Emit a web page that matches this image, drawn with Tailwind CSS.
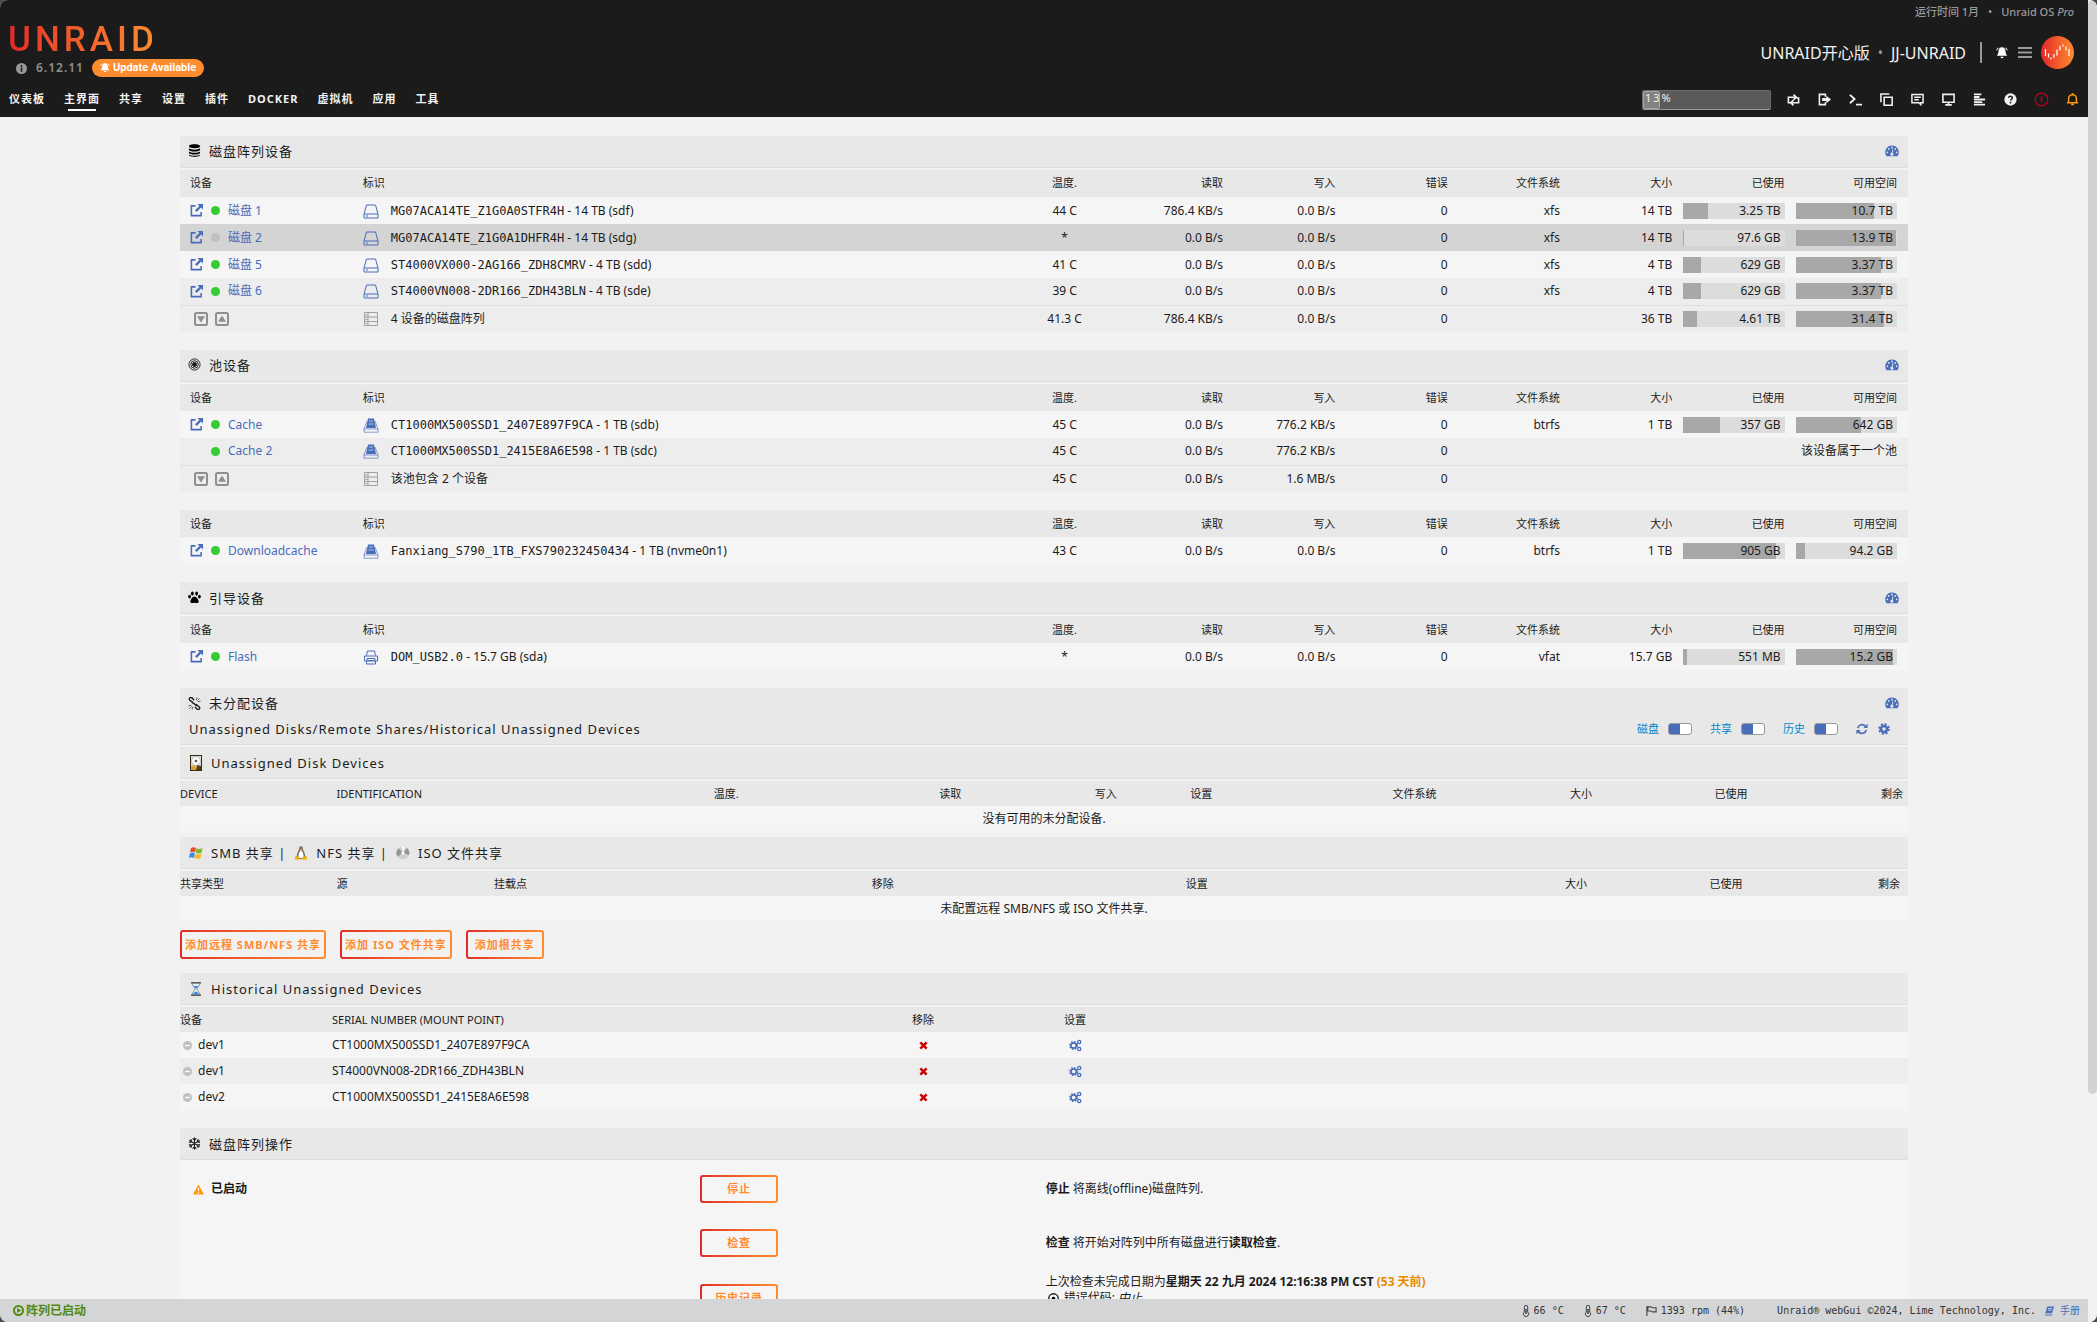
<!DOCTYPE html>
<html lang="zh-CN">
<head>
<meta charset="utf-8">
<title>JJ-UNRAID / 主界面</title>
<script src="https://cdn.jsdelivr.net/npm/@tailwindcss/browser@4"></script>
</head>
<body class="bg-[#4b4b52] font-['Noto_Sans','Noto_Sans_CJK_SC',sans-serif] text-[12px] leading-4 text-[#1c1b1b]">

<svg class="hidden" aria-hidden="true">
  <symbol id="i-ext" viewBox="0 0 14 14"><path d="M6 2H1.500v10.500H12V8.500" fill="none" stroke="currentColor" stroke-width="1.700"/><path d="M8 0h6v6l-2.100-2.100-4.700 4.700-1.800-1.800 4.700-4.700z" fill="currentColor"/></symbol>
  <symbol id="i-hdd" viewBox="0 0 16 16"><path d="M3.500 2h9L15 11v4H1v-4zM1 11h14" fill="none" stroke="currentColor"/><path d="M3 13h2" stroke="currentColor"/></symbol>
  <symbol id="i-ssd" viewBox="0 0 16 16"><path d="M5 1.500h6l2 9.500H3z" fill="currentColor"/><path d="M6 4h4M5.500 7h5" stroke="#cdd8ee" stroke-width=".8"/><path d="M4 4L1 12v3.200h14V12l-3-8M1 12h14" fill="none" stroke="currentColor" stroke-opacity=".65"/></symbol>
  <symbol id="i-usb" viewBox="0 0 16 16"><path d="M3.500 6.500l1-4.500h7l1 4.500M1.500 7h13v5h-13zM3.500 12v3h9v-3M4 9.500h8v2H4z" fill="none" stroke="currentColor"/></symbol>
  <symbol id="i-rack" viewBox="0 0 16 16"><path d="M1.500 1.500h13v13h-13zM1.500 6h13M1.500 10.500h13M5 1.500v13" fill="none" stroke="#a0a0a0"/><path d="M2.500 4h2M2.500 8.500h2M2.500 12.500h2" stroke="#a0a0a0"/></symbol>
  <symbol id="i-down" viewBox="0 0 14 14"><rect x="1" y="1" width="12" height="12" rx="1.500" fill="none" stroke="#8f8f8f" stroke-width="2"/><path d="M3 4.300h8L7 10.500z" fill="#8f8f8f"/></symbol>
  <symbol id="i-up" viewBox="0 0 14 14"><rect x="1" y="1" width="12" height="12" rx="1.500" fill="none" stroke="#8f8f8f" stroke-width="2"/><path d="M3 9.700h8L7 3.500z" fill="#8f8f8f"/></symbol>
  <symbol id="i-gauge" viewBox="0 0 14 12"><path d="M7 .5a6.800 6.800 0 0 0-5.800 10.300l.5.500h10.600l.5-.5A6.800 6.800 0 0 0 7 .5z" fill="#486dba"/><g fill="#e8e8e8"><circle cx="2.300" cy="7.300" r=".9"/><circle cx="3.700" cy="3.900" r=".9"/><circle cx="7" cy="2.500" r=".9"/><circle cx="10.300" cy="3.900" r=".9"/><circle cx="11.700" cy="7.300" r=".9"/><path d="M7.600 4.200l.9.200-.8 3.500a1.500 1.500 0 1 1-.9-.2z"/></g></symbol>
  <symbol id="i-cogs" viewBox="0 0 14 14"><circle cx="5" cy="7" r="2.900" fill="none" stroke="#486dba" stroke-width="1.800"/><circle cx="5" cy="7" r="4.300" fill="none" stroke="#486dba" stroke-width="1.300" stroke-dasharray="1.700 1.680"/><circle cx="11" cy="3.200" r="1.700" fill="none" stroke="#486dba" stroke-width="1.400"/><circle cx="11" cy="10.800" r="1.700" fill="none" stroke="#486dba" stroke-width="1.400"/></symbol>
  <symbol id="i-x" viewBox="0 0 10 10"><path d="M1.500 1.500l7 7M8.500 1.500l-7 7" stroke="#cc0000" stroke-width="2.800"/></symbol>
  <symbol id="i-minus" viewBox="0 0 10 10"><circle cx="5" cy="5" r="5" fill="#c0c0c0"/><path d="M2.200 5h5.600" stroke="#fff" stroke-width="1.500"/></symbol>
  <symbol id="i-bell" viewBox="0 0 12 12"><path d="M6 .3c2.600 0 3.500 2 3.600 4.700.1 2 .9 2.700 1.600 3.700H.8c.7-1 1.500-1.700 1.600-3.700C2.500 2.300 3.400.3 6 .3zM4.500 9.700h3a1.500 1.500 0 0 1-3 0z" fill="currentColor"/><path d="M2.300.7L.6 3.300M9.700.7l1.700 2.600" stroke="currentColor"/></symbol>
  <symbol id="i-thermo" viewBox="0 0 8 12"><path d="M2.300 7V2a1.700 1.700 0 0 1 3.400 0v5a2.600 2.600 0 1 1-3.400 0z" fill="none" stroke="#444"/><path d="M4 4v5" stroke="#444" stroke-width="1.500"/></symbol>
</svg>

<div class="flex h-screen overflow-hidden rounded-[8px] bg-[#f2f2f2]">
<div class="flex min-w-0 flex-1 flex-col">

<header class="shrink-0 bg-[#1c1b1b] text-[#f2f2f2]">
  <div class="flex h-[82px] justify-between pr-[14px] pl-2">
    <div class="pt-[25px]">
      <a href="#" class="block w-fit bg-linear-to-r from-[#e22828] to-[#ff8c2f] bg-clip-text font-['Roboto',sans-serif] text-[35px] leading-[30px] font-medium tracking-[4px] text-transparent">UNRAID</a>
      <div class="mt-1 flex h-[18px] items-center pl-2">
        <svg class="size-[11px]" viewBox="0 0 12 12"><circle cx="6" cy="6" r="6" fill="#999"/><path d="M6 2.300v1.700M6 5v4.500" stroke="#1c1b1b" stroke-width="1.800"/></svg>
        <span class="ml-[9px] text-[12px] font-semibold tracking-[1px] text-[#8f8f8f]">6.12.11</span>
        <button class="ml-2 flex h-[18px] items-center gap-[3px] rounded-full bg-[#ff8c2f] px-2 font-['Roboto',sans-serif] text-[11px] font-bold whitespace-nowrap text-white"><svg class="size-[10px]"><use href="#i-bell"/></svg>Update Available</button>
      </div>
    </div>
    <div class="flex flex-col items-end pt-1">
      <div class="flex h-4 items-center text-[11px] font-medium text-[#999]"><span>运行时间 1月</span><span class="mx-[9px]">•</span><span>Unraid OS <em>Pro</em></span></div>
      <div class="mt-4 flex h-[33px] items-center">
        <span class="text-[16px] leading-6">UNRAID开心版</span><span class="mx-2 text-[14px] text-[#999]">•</span><span class="text-[16px] leading-6">JJ-UNRAID</span>
        <span class="mx-[14px] h-[21px] w-[2px] bg-[#999]"></span>
        <button aria-label="通知" class="text-white"><svg class="block size-3"><use href="#i-bell"/></svg></button>
        <button aria-label="菜单" class="mr-[9px] ml-[10px]"><svg class="block h-[11px] w-[14px]" viewBox="0 0 14 11"><path d="M0 1h14M0 5.500h14M0 10h14" stroke="#999" stroke-width="1.800"/></svg></button>
        <svg class="size-[33px]" viewBox="0 0 33 33"><defs><linearGradient id="g"><stop stop-color="#e22828"/><stop offset="1" stop-color="#ff8c2f"/></linearGradient></defs><circle cx="16.500" cy="16.500" r="16.500" fill="url(#g)"/><path d="M4.500 13v7M7.500 17.500v4M10 21.500v2M13 18v4M16 13.500v6M19 10v4.500M22 8.500v2M25 10.500v4M28 13v7" stroke="#fff" stroke-width="1.200"/></svg>
      </div>
    </div>
  </div>
  <div class="flex h-[35px] items-center justify-between">
    <nav class="flex gap-[19px] pt-[2px] pl-[9px] text-[11px] font-bold tracking-[1px] whitespace-nowrap [&_a]:h-5 [&_a]:leading-4">
      <a href="#">仪表板</a><a href="#" class="relative after:absolute after:inset-x-1 after:bottom-0 after:h-[2px] after:bg-white">主界面</a><a href="#">共享</a><a href="#">设置</a><a href="#">插件</a><a href="#">DOCKER</a><a href="#">虚拟机</a><a href="#">应用</a><a href="#">工具</a>
    </nav>
    <div class="flex items-center text-[#f2f2f2] [&_button]:flex [&_button]:w-[31px] [&_button]:justify-center [&_svg]:size-[13px]">
      <div class="relative mr-[7px] h-5 w-[129px] rounded-xs border border-[#6b6b6b] border-b-[#999] bg-[#5a5a5a]">
        <div class="h-full rounded-xs border border-[#a5a5a5] bg-[#828282]" style="width:13%"></div>
        <span class="absolute top-0 left-[2px] text-[11px] leading-[14px] tracking-[2px]">13%</span>
      </div>
      <button aria-label="切换"><svg viewBox="0 0 14 14" fill="none" stroke="currentColor" stroke-width="1.700"><path d="M1.500 8.500V4.500h7M5.500 10.500h7V5.500h-2M7 1.700l3 2.800-3 2.800M7 7.700l-3 2.800 3 2.800M1.500 8.500v2h2"/></svg></button>
      <button aria-label="注销"><svg viewBox="0 0 14 14"><path d="M8 4V1.500H1.500v11H8V10" fill="none" stroke="currentColor" stroke-width="1.700"/><path d="M4.500 5.500h4.500V3l5 4-5 4V8.500H4.500z" fill="currentColor"/></svg></button>
      <button aria-label="终端"><svg viewBox="0 0 14 14" fill="none" stroke="currentColor" stroke-width="2"><path d="M1 2l5 4.500L1 11M7.500 12.500H14"/></svg></button>
      <button aria-label="文件管理器"><svg viewBox="0 0 14 14" fill="none" stroke="currentColor" stroke-width="1.700"><path d="M4.500 4.500h8.600v8.600H4.500zM1 10V1h9"/></svg></button>
      <button aria-label="反馈"><svg viewBox="0 0 14 14" fill="none" stroke="currentColor" stroke-width="1.600"><path d="M1 1.500h12v9h-2.500v2l-2-2H1zM3.500 4.500h7M3.500 7.300h5"/></svg></button>
      <button aria-label="信息"><svg viewBox="0 0 14 14" fill="none" stroke="currentColor" stroke-width="1.700"><path d="M1 1.500h12v8.500H1zM3.500 12.800h7M7 10v2"/></svg></button>
      <button aria-label="日志"><svg viewBox="0 0 14 14" stroke="currentColor" stroke-width="1.900"><path d="M1 1.500h8M1 4.300h6M1 7h12M1 9.800h9M1 12.600h12"/></svg></button>
      <button aria-label="帮助"><svg viewBox="0 0 14 14"><circle cx="7" cy="7" r="6.600" fill="currentColor"/><path d="M5 5.300c.2-2.300 4.200-2.200 4 .1C8.900 6.700 7.200 6.700 7 8.300M7 9.400v1.800" fill="none" stroke="#1c1b1b" stroke-width="1.600"/></svg></button>
      <button aria-label="警报"><svg class="scale-110" viewBox="0 0 14 14" fill="none" stroke="#b8001f" stroke-width="1.200"><circle cx="7" cy="7" r="6.200"/><path d="M7 4v6" stroke-width="1.500"/></svg></button>
      <button aria-label="通知"><svg viewBox="0 0 14 14" fill="none" stroke="#ff9900" stroke-width="1.600"><path d="M1 10.500h12M2.800 10.500V6a4.200 4.200 0 0 1 8.400 0v4.500M5.500 12.500h3M7 0v2"/></svg></button>
    </div>
  </div>
</header>

<main class="min-h-0 flex-1 overflow-hidden px-[180px] pt-[19px]">

  <section>
    <h2 class="mb-[2px] flex h-8 items-center border-b border-[#dedede] bg-[#e8e8e8] pr-[9px] pb-[2px] pl-2 text-[13px] tracking-[1px]">
      <svg class="mr-2 size-[13px]" viewBox="0 0 14 14"><path d="M1 2.500C1-.3 13-.3 13 2.500S1 5.300 1 2.500zM1 4.600c2 2 10 2 12 0v1.600c0 2.500-12 2.500-12 0zM1 8c2 2 10 2 12 0v1.500c0 2.500-12 2.500-12 0zM1 11.200c2 2 10 2 12 0v.5c0 3-12 3-12 0z"/></svg>
      <span class="flex-1">磁盘阵列设备</span><a href="#" aria-label="切换读写"><svg class="h-3 w-[14px]"><use href="#i-gauge"/></svg></a>
    </h2>
    <table class="w-full table-fixed text-right whitespace-nowrap [&_td]:pr-[11px] [&_td:nth-child(3)]:pr-[2px] [&_th]:pr-[11px] [&_th]:pb-[2px] [&_th]:font-normal [&_th:nth-child(3)]:pr-[2px] [&_tr]:h-[27px]">
      <colgroup><col class="w-[10%]"><col class="w-[38%]"><col class="w-[6.5%]"><col class="w-[6.5%]"><col class="w-[6.5%]"><col class="w-[6.5%]"><col class="w-[6.5%]"><col class="w-[6.5%]"><col class="w-[6.5%]"><col class="w-[6.5%]"></colgroup>
      <thead class="bg-[#e8e8e8] text-[11px]"><tr><th class="pl-[10px] text-left">设备</th><th class="pl-[10px] text-left">标识</th><th class="text-center">温度.</th><th>读取</th><th>写入</th><th>错误</th><th>文件系统</th><th>大小</th><th>已使用</th><th>可用空间</th></tr></thead>
      <tbody>
        <tr class="bg-[#f5f5f5]"><td><div class="flex items-center pl-[10px] text-[#486dba]"><a href="#" aria-label="浏览"><svg class="size-[13px]"><use href="#i-ext"/></svg></a><span class="mx-2 size-[9px] rounded-full bg-[#33cc33]"></span><a href="#">磁盘 1</a></div></td><td><div class="flex items-center pl-[10px]"><svg class="mr-3 size-4 text-[#486dba]"><use href="#i-hdd"/></svg><span><span class="font-['DejaVu_Sans_Mono',monospace]">MG07ACA14TE_Z1G0A0STFR4H</span> - 14 TB (sdf)</span></div></td><td class="text-center">44 C</td><td>786.4 KB/s</td><td>0.0 B/s</td><td>0</td><td>xfs</td><td>14 TB</td>
          <td><div class="relative h-4 bg-[#dcdcdc]"><div class="absolute inset-y-0 left-0 bg-[#a8a8a8]" style="width:24%"></div><span class="relative pr-1">3.25 TB</span></div></td><td><div class="relative h-4 bg-[#dcdcdc]"><div class="absolute inset-y-0 left-0 bg-[#a8a8a8]" style="width:77%"></div><span class="relative pr-1">10.7 TB</span></div></td></tr>
        <tr class="bg-[#d4d4d4]"><td><div class="flex items-center pl-[10px] text-[#486dba]"><a href="#" aria-label="浏览"><svg class="size-[13px]"><use href="#i-ext"/></svg></a><span class="mx-2 size-[9px] rounded-full bg-[#c0c0c0]"></span><a href="#">磁盘 2</a></div></td><td><div class="flex items-center pl-[10px]"><svg class="mr-3 size-4 text-[#486dba]"><use href="#i-hdd"/></svg><span><span class="font-['DejaVu_Sans_Mono',monospace]">MG07ACA14TE_Z1G0A1DHFR4H</span> - 14 TB (sdg)</span></div></td><td class="text-center">*</td><td>0.0 B/s</td><td>0.0 B/s</td><td>0</td><td>xfs</td><td>14 TB</td>
          <td><div class="relative h-4 bg-[#dcdcdc]"><div class="absolute inset-y-0 left-0 bg-[#a8a8a8]" style="width:1%"></div><span class="relative pr-1">97.6 GB</span></div></td><td><div class="relative h-4 bg-[#dcdcdc]"><div class="absolute inset-y-0 left-0 bg-[#a8a8a8]" style="width:99%"></div><span class="relative pr-1">13.9 TB</span></div></td></tr>
        <tr class="bg-[#f5f5f5]"><td><div class="flex items-center pl-[10px] text-[#486dba]"><a href="#" aria-label="浏览"><svg class="size-[13px]"><use href="#i-ext"/></svg></a><span class="mx-2 size-[9px] rounded-full bg-[#33cc33]"></span><a href="#">磁盘 5</a></div></td><td><div class="flex items-center pl-[10px]"><svg class="mr-3 size-4 text-[#486dba]"><use href="#i-hdd"/></svg><span><span class="font-['DejaVu_Sans_Mono',monospace]">ST4000VX000-2AG166_ZDH8CMRV</span> - 4 TB (sdd)</span></div></td><td class="text-center">41 C</td><td>0.0 B/s</td><td>0.0 B/s</td><td>0</td><td>xfs</td><td>4 TB</td>
          <td><div class="relative h-4 bg-[#dcdcdc]"><div class="absolute inset-y-0 left-0 bg-[#a8a8a8]" style="width:17%"></div><span class="relative pr-1">629 GB</span></div></td><td><div class="relative h-4 bg-[#dcdcdc]"><div class="absolute inset-y-0 left-0 bg-[#a8a8a8]" style="width:84%"></div><span class="relative pr-1">3.37 TB</span></div></td></tr>
        <tr class="bg-[#ededed]"><td><div class="flex items-center pl-[10px] text-[#486dba]"><a href="#" aria-label="浏览"><svg class="size-[13px]"><use href="#i-ext"/></svg></a><span class="mx-2 size-[9px] rounded-full bg-[#33cc33]"></span><a href="#">磁盘 6</a></div></td><td><div class="flex items-center pl-[10px]"><svg class="mr-3 size-4 text-[#486dba]"><use href="#i-hdd"/></svg><span><span class="font-['DejaVu_Sans_Mono',monospace]">ST4000VN008-2DR166_ZDH43BLN</span> - 4 TB (sde)</span></div></td><td class="text-center">39 C</td><td>0.0 B/s</td><td>0.0 B/s</td><td>0</td><td>xfs</td><td>4 TB</td>
          <td><div class="relative h-4 bg-[#dcdcdc]"><div class="absolute inset-y-0 left-0 bg-[#a8a8a8]" style="width:17%"></div><span class="relative pr-1">629 GB</span></div></td><td><div class="relative h-4 bg-[#dcdcdc]"><div class="absolute inset-y-0 left-0 bg-[#a8a8a8]" style="width:84%"></div><span class="relative pr-1">3.37 TB</span></div></td></tr>
      </tbody>
      <tfoot><tr class="border-t border-[#dedede] bg-[#ededed]"><td><div class="flex gap-[7px] pl-[14px]"><button aria-label="全部停转"><svg class="block size-[14px]"><use href="#i-down"/></svg></button><button aria-label="全部起转"><svg class="block size-[14px]"><use href="#i-up"/></svg></button></div></td><td><div class="flex items-center pl-[10px]"><svg class="mr-3 size-4"><use href="#i-rack"/></svg><span>4 设备的磁盘阵列</span></div></td><td class="text-center">41.3 C</td><td>786.4 KB/s</td><td>0.0 B/s</td><td>0</td><td></td><td>36 TB</td>
          <td><div class="relative h-4 bg-[#dcdcdc]"><div class="absolute inset-y-0 left-0 bg-[#a8a8a8]" style="width:14%"></div><span class="relative pr-1">4.61 TB</span></div></td><td><div class="relative h-4 bg-[#dcdcdc]"><div class="absolute inset-y-0 left-0 bg-[#a8a8a8]" style="width:87%"></div><span class="relative pr-1">31.4 TB</span></div></td></tr></tfoot>
    </table>
  </section>

  <section class="mt-[18px]">
    <h2 class="mb-[2px] flex h-8 items-center border-b border-[#dedede] bg-[#e8e8e8] pr-[9px] pb-[2px] pl-2 text-[13px] tracking-[1px]">
      <svg class="mr-2 size-[13px]" viewBox="0 0 14 14" fill="none" stroke="#1c1b1b"><circle cx="7" cy="7" r="6"/><circle cx="7" cy="7" r="4"/><circle cx="7" cy="7" r="2.200" fill="#1c1b1b"/></svg>
      <span class="flex-1">池设备</span><a href="#" aria-label="切换读写"><svg class="h-3 w-[14px]"><use href="#i-gauge"/></svg></a>
    </h2>
    <table class="w-full table-fixed text-right whitespace-nowrap [&_td]:pr-[11px] [&_td:nth-child(3)]:pr-[2px] [&_th]:pr-[11px] [&_th]:font-normal [&_th:nth-child(3)]:pr-[2px] [&_tr]:h-[27px]">
      <colgroup><col class="w-[10%]"><col class="w-[38%]"><col class="w-[6.5%]"><col class="w-[6.5%]"><col class="w-[6.5%]"><col class="w-[6.5%]"><col class="w-[6.5%]"><col class="w-[6.5%]"><col class="w-[6.5%]"><col class="w-[6.5%]"></colgroup>
      <thead class="bg-[#e8e8e8] text-[11px]"><tr><th class="pl-[10px] text-left">设备</th><th class="pl-[10px] text-left">标识</th><th class="text-center">温度.</th><th>读取</th><th>写入</th><th>错误</th><th>文件系统</th><th>大小</th><th>已使用</th><th>可用空间</th></tr></thead>
      <tbody>
        <tr class="bg-[#f5f5f5]"><td><div class="flex items-center pl-[10px] text-[#486dba]"><a href="#" aria-label="浏览"><svg class="size-[13px]"><use href="#i-ext"/></svg></a><span class="mx-2 size-[9px] rounded-full bg-[#33cc33]"></span><a href="#">Cache</a></div></td><td><div class="flex items-center pl-[10px]"><svg class="mr-3 size-4 text-[#486dba]"><use href="#i-ssd"/></svg><span><span class="font-['DejaVu_Sans_Mono',monospace]">CT1000MX500SSD1_2407E897F9CA</span> - 1 TB (sdb)</span></div></td><td class="text-center">45 C</td><td>0.0 B/s</td><td>776.2 KB/s</td><td>0</td><td>btrfs</td><td>1 TB</td>
          <td><div class="relative h-4 bg-[#dcdcdc]"><div class="absolute inset-y-0 left-0 bg-[#a8a8a8]" style="width:36%"></div><span class="relative pr-1">357 GB</span></div></td><td><div class="relative h-4 bg-[#dcdcdc]"><div class="absolute inset-y-0 left-0 bg-[#a8a8a8]" style="width:64%"></div><span class="relative pr-1">642 GB</span></div></td></tr>
        <tr class="bg-[#ededed]"><td><div class="flex items-center pl-[23px] text-[#486dba]"><span class="mx-2 size-[9px] rounded-full bg-[#33cc33]"></span><a href="#">Cache 2</a></div></td><td><div class="flex items-center pl-[10px]"><svg class="mr-3 size-4 text-[#486dba]"><use href="#i-ssd"/></svg><span><span class="font-['DejaVu_Sans_Mono',monospace]">CT1000MX500SSD1_2415E8A6E598</span> - 1 TB (sdc)</span></div></td><td class="text-center">45 C</td><td>0.0 B/s</td><td>776.2 KB/s</td><td>0</td><td></td><td></td><td colspan="2">该设备属于一个池</td></tr>
      </tbody>
      <tfoot><tr class="border-t border-[#dedede] bg-[#ededed]"><td><div class="flex gap-[7px] pl-[14px]"><button aria-label="全部停转"><svg class="block size-[14px]"><use href="#i-down"/></svg></button><button aria-label="全部起转"><svg class="block size-[14px]"><use href="#i-up"/></svg></button></div></td><td><div class="flex items-center pl-[10px]"><svg class="mr-3 size-4"><use href="#i-rack"/></svg><span>该池包含 2 个设备</span></div></td><td class="text-center">45 C</td><td>0.0 B/s</td><td>1.6 MB/s</td><td>0</td><td></td><td></td><td></td><td></td></tr></tfoot>
    </table>
    <table class="mt-[18px] w-full table-fixed text-right whitespace-nowrap [&_td]:pr-[11px] [&_td:nth-child(3)]:pr-[2px] [&_th]:pr-[11px] [&_th]:font-normal [&_th:nth-child(3)]:pr-[2px] [&_tr]:h-[27px]">
      <colgroup><col class="w-[10%]"><col class="w-[38%]"><col class="w-[6.5%]"><col class="w-[6.5%]"><col class="w-[6.5%]"><col class="w-[6.5%]"><col class="w-[6.5%]"><col class="w-[6.5%]"><col class="w-[6.5%]"><col class="w-[6.5%]"></colgroup>
      <thead class="bg-[#e8e8e8] text-[11px]"><tr><th class="pl-[10px] text-left">设备</th><th class="pl-[10px] text-left">标识</th><th class="text-center">温度.</th><th>读取</th><th>写入</th><th>错误</th><th>文件系统</th><th>大小</th><th>已使用</th><th>可用空间</th></tr></thead>
      <tbody>
        <tr class="bg-[#f5f5f5]"><td><div class="flex items-center pl-[10px] text-[#486dba]"><a href="#" aria-label="浏览"><svg class="size-[13px]"><use href="#i-ext"/></svg></a><span class="mx-2 size-[9px] rounded-full bg-[#33cc33]"></span><a href="#">Downloadcache</a></div></td><td><div class="flex items-center pl-[10px]"><svg class="mr-3 size-4 text-[#486dba]"><use href="#i-ssd"/></svg><span><span class="font-['DejaVu_Sans_Mono',monospace]">Fanxiang_S790_1TB_FXS790232450434</span> - 1 TB (nvme0n1)</span></div></td><td class="text-center">43 C</td><td>0.0 B/s</td><td>0.0 B/s</td><td>0</td><td>btrfs</td><td>1 TB</td>
          <td><div class="relative h-4 bg-[#dcdcdc]"><div class="absolute inset-y-0 left-0 bg-[#a8a8a8]" style="width:91%"></div><span class="relative pr-1">905 GB</span></div></td><td><div class="relative h-4 bg-[#dcdcdc]"><div class="absolute inset-y-0 left-0 bg-[#a8a8a8]" style="width:9%"></div><span class="relative pr-1">94.2 GB</span></div></td></tr>
      </tbody>
    </table>
  </section>

  <section class="mt-[18px]">
    <h2 class="mb-[2px] flex h-8 items-center border-b border-[#dedede] bg-[#e8e8e8] pr-[9px] pl-2 text-[13px] tracking-[1px]">
      <svg class="mr-2 size-[13px]" viewBox="0 0 14 14"><ellipse cx="1.700" cy="6" rx="1.500" ry="2"/><ellipse cx="12.300" cy="6" rx="1.500" ry="2"/><ellipse cx="4.700" cy="2.800" rx="1.500" ry="2.200"/><ellipse cx="9.300" cy="2.800" rx="1.500" ry="2.200"/><path d="M7 6c2 0 4.500 3.500 4.500 5.300 0 2.500-3 1.300-4.500 1.300s-4.500 1.200-4.500-1.300C2.500 9.500 5 6 7 6z"/></svg>
      <span class="flex-1">引导设备</span><a href="#" aria-label="切换读写"><svg class="h-3 w-[14px]"><use href="#i-gauge"/></svg></a>
    </h2>
    <table class="w-full table-fixed text-right whitespace-nowrap [&_td]:pr-[11px] [&_td:nth-child(3)]:pr-[2px] [&_th]:pr-[11px] [&_th]:font-normal [&_th:nth-child(3)]:pr-[2px] [&_tr]:h-[27px]">
      <colgroup><col class="w-[10%]"><col class="w-[38%]"><col class="w-[6.5%]"><col class="w-[6.5%]"><col class="w-[6.5%]"><col class="w-[6.5%]"><col class="w-[6.5%]"><col class="w-[6.5%]"><col class="w-[6.5%]"><col class="w-[6.5%]"></colgroup>
      <thead class="bg-[#e8e8e8] text-[11px]"><tr><th class="pl-[10px] text-left">设备</th><th class="pl-[10px] text-left">标识</th><th class="text-center">温度.</th><th>读取</th><th>写入</th><th>错误</th><th>文件系统</th><th>大小</th><th>已使用</th><th>可用空间</th></tr></thead>
      <tbody>
        <tr class="bg-[#f5f5f5]"><td><div class="flex items-center pl-[10px] text-[#486dba]"><a href="#" aria-label="浏览"><svg class="size-[13px]"><use href="#i-ext"/></svg></a><span class="mx-2 size-[9px] rounded-full bg-[#33cc33]"></span><a href="#">Flash</a></div></td><td><div class="flex items-center pl-[10px]"><svg class="mr-3 size-4 text-[#486dba]"><use href="#i-usb"/></svg><span><span class="font-['DejaVu_Sans_Mono',monospace]">DOM_USB2.0</span> - 15.7 GB (sda)</span></div></td><td class="text-center">*</td><td>0.0 B/s</td><td>0.0 B/s</td><td>0</td><td>vfat</td><td>15.7 GB</td>
          <td><div class="relative h-4 bg-[#dcdcdc]"><div class="absolute inset-y-0 left-0 bg-[#a8a8a8]" style="width:4%"></div><span class="relative pr-1">551 MB</span></div></td><td><div class="relative h-4 bg-[#dcdcdc]"><div class="absolute inset-y-0 left-0 bg-[#a8a8a8]" style="width:96%"></div><span class="relative pr-1">15.2 GB</span></div></td></tr>
      </tbody>
    </table>
  </section>

  <section class="mt-[18px]">
    <div class="mb-[2px] h-[57px] border-b border-[#dedede] bg-[#e8e8e8] pr-[9px] pl-2 text-[13px] tracking-[1px]">
      <h2 class="flex h-[30px] items-center">
        <svg class="mr-2 size-[13px]" viewBox="0 0 14 14" fill="none" stroke="#1c1b1b" stroke-width="1.500"><path d="M5.500 6L2 3.500C0 1 3-.5 5 1.500l1.500 2M8.500 8l3.500 2.500c2 2.500-1 4-3 2l-1.500-2M4 5.500l6 4"/><path d="M9 3.500L9.500.5M10.500 5l3-.5M5 10.500l-.5 3M3.500 9l-3 .5M10.200 3.800l2.300-2.300M3.800 10.200l-2.300 2.300" stroke-width=".7"/></svg>
        <span class="flex-1">未分配设备</span><a href="#" aria-label="切换读写"><svg class="h-3 w-[14px]"><use href="#i-gauge"/></svg></a>
      </h2>
      <div class="flex h-[22px] items-center">
        <span class="flex-1 pl-px">Unassigned Disks/Remote Shares/Historical Unassigned Devices</span>
        <div class="flex items-center gap-[18px] pr-[9px] text-[11px] tracking-normal text-[#0088cc]">
          <label class="flex items-center gap-[9px]">磁盘<input type="checkbox" checked class="h-3 w-6 appearance-none rounded-[3px] border border-[#999] bg-linear-to-r from-[#486dba] from-50% to-white to-50%"></label>
          <label class="flex items-center gap-[9px]">共享<input type="checkbox" checked class="h-3 w-6 appearance-none rounded-[3px] border border-[#999] bg-linear-to-r from-[#486dba] from-50% to-white to-50%"></label>
          <label class="flex items-center gap-[9px]">历史<input type="checkbox" checked class="h-3 w-6 appearance-none rounded-[3px] border border-[#999] bg-linear-to-r from-[#486dba] from-50% to-white to-50%"></label>
          <div class="flex gap-[10px]">
            <button aria-label="刷新"><svg class="block size-3" viewBox="0 0 14 14"><path d="M2 6a5.200 5.200 0 0 1 9-2.300M12 8a5.200 5.200 0 0 1-9 2.300" fill="none" stroke="#486dba" stroke-width="2"/><path d="M13.500.8v5h-5zM.5 13.200v-5h5z" fill="#486dba"/></svg></button>
            <button aria-label="设置"><svg class="block size-3" viewBox="0 0 14 14" fill="none" stroke="#486dba"><circle cx="7" cy="7" r="3.600" stroke-width="3"/><circle cx="7" cy="7" r="5.700" stroke-width="2.200" stroke-dasharray="2.400 2.076"/></svg></button>
          </div>
        </div>
      </div>
    </div>
    <h3 class="mb-[2px] flex h-8 items-center border-b border-[#dedede] bg-[#e8e8e8] pl-[10px] text-[13px] tracking-[1px]">
      <svg class="mr-[9px] h-4 w-3" viewBox="0 0 12 16"><rect x=".5" y=".5" width="11" height="15" fill="#ddd" stroke="#3b2a14"/><circle cx="6" cy="6" r="4.500" fill="#f7f7f7" stroke="#999" stroke-width=".5"/><circle cx="6" cy="6" r="1.300" fill="#555"/><path d="M1 15v-4l4-1 2 5z" fill="#d8a530"/><path d="M7 10l4 1v4H6z" fill="#54400f"/></svg>
      Unassigned Disk Devices
    </h3>
    <table class="w-full table-fixed text-right whitespace-nowrap [&_th]:font-normal [&_tr]:h-[25px]">
      <colgroup><col class="w-[9%]"><col class="w-[18%]"><col class="w-[9.5%]"><col class="w-[9%]"><col class="w-[9%]"><col class="w-[9.5%]"><col class="w-[9%]"><col class="w-[9%]"><col class="w-[9%]"><col class="w-[9%]"></colgroup>
      <thead class="bg-[#e8e8e8] text-[11px] [&_th]:pr-[5px]"><tr><th class="text-left">DEVICE</th><th class="pl-px text-left">IDENTIFICATION</th><th class="text-center">温度.</th><th>读取</th><th>写入</th><th class="text-center">设置</th><th>文件系统</th><th>大小</th><th>已使用</th><th>剩余</th></tr></thead>
      <tbody><tr class="bg-[#f5f5f5]"><td colspan="10" class="text-center">没有可用的未分配设备.</td></tr></tbody>
    </table>

    <h3 class="mt-[6px] mb-[2px] flex h-8 items-center border-b border-[#dedede] bg-[#e8e8e8] pl-[9px] text-[13px] tracking-[1px]">
      <svg class="mr-2 size-[14px]" viewBox="0 0 14 14"><path d="M2 2c2-1.300 3.500-1 5 0L6 6.500c-1.500-1-3-1-5-.2z" fill="#e8502a"/><path d="M7.700 2.300c2 1 3.500 1 5.800 0l-1 4.500c-2 1-4 .9-5.800-.2z" fill="#7cb82f"/><path d="M.9 7.200c2-1 3.500-.8 5 .1L5 12c-1.500-1-3-1.200-5-.2z" fill="#3b8be0"/><path d="M6.600 7.700c2 1 3.500 1 5.800 0l-1 4.500c-2 1-4 .8-5.800-.1z" fill="#f5b91e"/></svg>
      SMB 共享 |
      <svg class="mx-2 size-[14px]" viewBox="0 0 14 14"><path d="M7 .3c2 0 2 2.200 2.300 4C10 6 11.500 8 11.300 11L9 13H5l-2.300-2C2.500 8 4 6 4.700 4.300 5 2.500 5 .3 7 .3z" fill="#777"/><path d="M7 4c1.500 2 3 4 2.500 8h-5C4 8 5.500 6 7 4z" fill="#fff"/><path d="M1.500 10l3.500.8.900 2.700-5 .2zM12.500 10l-3.500.8-.9 2.700 5 .2zM5.500 3.300h3L7 5.300z" fill="#f2b200"/></svg>
      NFS 共享 |
      <svg class="mx-2 size-[14px]" viewBox="0 0 14 14"><circle cx="7" cy="7" r="6.500" fill="#cfcfcf"/><path d="M7 7L2.500 2.300A6.500 6.500 0 0 0 1.500 10.500zM7 7l4-5a6.500 6.500 0 0 1 2 7z" fill="#969696"/><path d="M7 7L6 .6h3z" fill="#fff"/><circle cx="7" cy="7" r="1.600" fill="#fff"/></svg>
      ISO 文件共享
    </h3>
    <table class="w-full table-fixed text-right whitespace-nowrap [&_th]:font-normal [&_tr]:h-[25px]">
      <colgroup><col class="w-[9%]"><col class="w-[9%]"><col class="w-[18%]"><col class="w-[9%]"><col class="w-[9%]"><col class="w-[9%]"><col class="w-[10%]"><col class="w-[9%]"><col class="w-[9%]"><col class="w-[9%]"></colgroup>
      <thead class="bg-[#e8e8e8] text-[11px]"><tr><th class="text-left">共享类型</th><th class="pl-px text-left">源</th><th class="pl-[3px] text-left">挂载点</th><th class="pl-[6px] text-center">移除</th><th></th><th class="pl-3 text-center">设置</th><th></th><th class="pr-[10px]">大小</th><th class="pr-[10px]">已使用</th><th class="pr-2">剩余</th></tr></thead>
      <tbody><tr class="bg-[#f5f5f5]"><td colspan="10" class="text-center">未配置远程 SMB/NFS 或 ISO 文件共享.</td></tr></tbody>
    </table>
    <div class="my-[9px] flex gap-[14px] text-[11px] font-bold tracking-[1px] text-[#ff8c2f] [&_span]:flex [&_span]:h-full [&_span]:items-center [&_span]:justify-center [&_span]:rounded-[1px] [&_span]:bg-[#f2f2f2] [&_span]:px-[3px] [&>button]:h-[29px] [&>button]:rounded-[3px] [&>button]:bg-linear-to-r [&>button]:from-[#e22828] [&>button]:to-[#ff8c2f] [&>button]:p-[2px]">
      <button><span>添加远程 SMB/NFS 共享</span></button><button><span>添加 ISO 文件共享</span></button><button class="w-[78px]"><span>添加根共享</span></button>
    </div>

    <h3 class="mt-[14px] mb-[2px] flex h-8 items-center border-b border-[#dedede] bg-[#e8e8e8] pl-[10px] text-[13px] tracking-[1px]">
      <svg class="mr-[9px] h-4 w-3" viewBox="0 0 12 16"><path d="M2 2h8c0 3-3 4.500-3 6s3 3 3 6H2c0-3 3-4.500 3-6S2 5 2 2z" fill="#e4eef8" stroke="#777" stroke-width=".7"/><path d="M3.500 5h5L6 8zM3 13.500c0-2 3-3 3-3s3 1 3 3z" fill="#3d8be0"/><path d="M1 1h10v1.500H1zM1 13.500h10V15H1z" fill="#5a5f66"/></svg>
      Historical Unassigned Devices
    </h3>
    <table class="w-full table-fixed text-left whitespace-nowrap [&_svg]:mx-auto [&_svg]:block [&_tbody_tr]:h-[26px] [&_th]:font-normal">
      <colgroup><col class="w-[8.8%]"><col class="w-[29.8%]"><col class="w-[8.8%]"><col class="w-[8.8%]"><col></colgroup>
      <thead class="bg-[#e8e8e8] text-[11px]"><tr class="h-[25px]"><th>设备</th><th>SERIAL NUMBER (MOUNT POINT)</th><th class="text-center">移除</th><th class="text-center">设置</th><th></th></tr></thead>
      <tbody>
        <tr class="bg-[#f5f5f5]"><td><div class="flex items-center gap-[6px] pl-[3px]"><span><svg class="size-[9px]"><use href="#i-minus"/></svg></span>dev1</div></td><td>CT1000MX500SSD1_2407E897F9CA</td><td><a href="#" aria-label="移除"><svg class="size-[9px]"><use href="#i-x"/></svg></a></td><td><a href="#" aria-label="设置"><svg class="size-[13px]"><use href="#i-cogs"/></svg></a></td><td></td></tr>
        <tr class="bg-[#ededed]"><td><div class="flex items-center gap-[6px] pl-[3px]"><span><svg class="size-[9px]"><use href="#i-minus"/></svg></span>dev1</div></td><td>ST4000VN008-2DR166_ZDH43BLN</td><td><a href="#" aria-label="移除"><svg class="size-[9px]"><use href="#i-x"/></svg></a></td><td><a href="#" aria-label="设置"><svg class="size-[13px]"><use href="#i-cogs"/></svg></a></td><td></td></tr>
        <tr class="bg-[#f5f5f5]"><td><div class="flex items-center gap-[6px] pl-[3px]"><span><svg class="size-[9px]"><use href="#i-minus"/></svg></span>dev2</div></td><td>CT1000MX500SSD1_2415E8A6E598</td><td><a href="#" aria-label="移除"><svg class="size-[9px]"><use href="#i-x"/></svg></a></td><td><a href="#" aria-label="设置"><svg class="size-[13px]"><use href="#i-cogs"/></svg></a></td><td></td></tr>
      </tbody>
    </table>
  </section>

  <section class="mt-[18px]">
    <h2 class="flex h-8 items-center border-b border-[#dedede] bg-[#e8e8e8] pl-2 text-[13px] tracking-[1px]">
      <svg class="mr-2 size-[13px]" viewBox="0 0 14 14" fill="none" stroke="#1c1b1b" stroke-width="1.200"><path d="M7 .5v13M1.400 3.700l11.200 6.600M1.400 10.300l11.200-6.600M5 1.500l2 2 2-2M5 12.500l2-2 2 2M1 6l2.800-.8-.7-2.800M13 8l-2.800.8.700 2.800M1 8l2.800.8-.7 2.800M13 6l-2.800-.8.700-2.800"/></svg>
      磁盘阵列操作
    </h2>
    <div class="bg-[#f5f5f5] pb-10 [&_button]:h-7 [&_button]:w-[78px] [&_button]:rounded-[3px] [&_button]:bg-linear-to-r [&_button]:from-[#e22828] [&_button]:to-[#ff8c2f] [&_button]:p-[2px] [&_button]:text-[11px] [&_button]:font-bold [&_button]:tracking-[1px] [&_button]:text-[#ff8c2f] [&_button>span]:flex [&_button>span]:h-full [&_button>span]:items-center [&_button>span]:justify-center [&_button>span]:rounded-[1px] [&_button>span]:bg-[#f5f5f5] [&>div]:grid [&>div]:grid-cols-[30.1%_20%_1fr]">
      <div class="h-[58px] items-center"><p class="flex items-center gap-[7px] pl-[13px] font-bold"><svg class="size-[11px]" viewBox="0 0 12 12"><path d="M6 .5l6 11H0z" fill="#ff9900"/><path d="M6 4v4M6 9v1.500" stroke="#fff" stroke-width="1.400"/></svg>已启动</p><button><span>停止</span></button><p><b>停止</b> 将离线(offline)磁盘阵列.</p></div>
      <div class="h-[50px] items-center"><p></p><button><span>检查</span></button><p><b>检查</b> 将开始对阵列中所有磁盘进行<b>读取检查</b>.</p></div>
      <div class="items-start pt-[6px]"><p></p><button class="mt-[10px]"><span>历史记录</span></button><p>上次检查未完成日期为<b>星期天 22 九月 2024 12:16:38 PM CST <span class="text-[#e68a00]">(53 天前)</span></b><br><svg class="mr-[5px] ml-[2px] inline size-[11px]" viewBox="0 0 12 12"><circle cx="6" cy="6" r="5.200" fill="none" stroke="#1c1b1b" stroke-width="1.500"/><circle cx="6" cy="6" r="2"/></svg>错误代码: <i>中止</i></p></div>
    </div>
  </section>
</main>

<footer class="flex h-[23px] shrink-0 items-center justify-between bg-[#d4d5d6] pr-2 pl-[13px] font-['DejaVu_Sans_Mono','Noto_Sans_CJK_SC',monospace] text-[10px] text-[#333] [&_svg]:shrink-0">
  <span class="flex items-center gap-[2px] text-[12px] font-bold text-[#4f8a10]"><svg class="size-[11px]" viewBox="0 0 12 12"><circle cx="6" cy="6" r="4.900" fill="none" stroke="currentColor" stroke-width="2.200"/><path d="M4.500 3.300L9 6 4.500 8.700z" fill="currentColor"/></svg>阵列已启动</span>
  <span class="flex items-center whitespace-nowrap">
    <svg class="mr-1 h-3 w-2"><use href="#i-thermo"/></svg>66 °C
    <svg class="mr-1 ml-5 h-3 w-2"><use href="#i-thermo"/></svg>67 °C
    <svg class="mr-1 ml-5 size-[11px]" viewBox="0 0 12 12" fill="none" stroke="#444" stroke-width="1.200"><path d="M1 1v11M2 2h3l2 1h4v4.500H7l-2-1H2z"/></svg>1393 rpm (44%)
    <span class="ml-8">Unraid® webGui ©2024, Lime Technology, Inc.</span>
    <a href="#" class="ml-2 flex items-center gap-[6px] text-[#486dba]"><svg class="size-[10px]" viewBox="0 0 12 12"><path d="M4 .5h8L9.500 9h-8zM1 9.500l.5 2h8l.7-2" fill="#486dba"/><path d="M5 3h4.500M4.500 5H9M1.500 9.800h8.300" stroke="#fff" stroke-width=".8"/></svg>手册</a>
  </span>
</footer>
</div>
<div class="w-[9px] shrink-0 bg-[#f2f2f2]"><div class="h-[1094px] rounded-full bg-[#d2d2d3]"></div></div>
</div>
</body>
</html>
